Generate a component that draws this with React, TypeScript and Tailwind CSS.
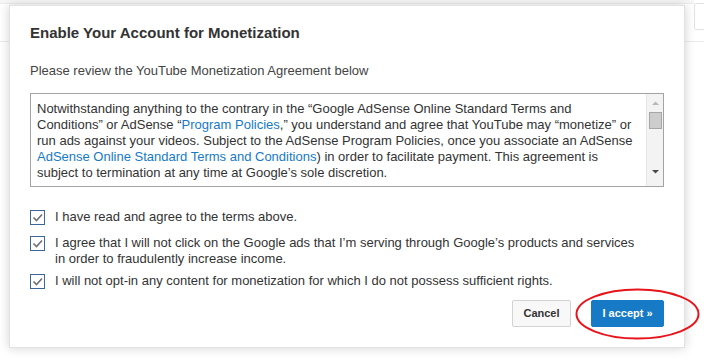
import React from "react";

const font = { fontFamily: '"Liberation Sans", Arial, sans-serif' };

function Check() {
  return (
    <span className="mt-[1px] flex h-[15px] w-[15px] shrink-0 items-center justify-center border border-[#3b679c] bg-white">
      <svg width="13" height="13" viewBox="0 0 13 13">
        <polyline points="2.5,6.5 5.5,9.5 11,3.5" fill="none" stroke="#707070" strokeWidth="1.6" />
      </svg>
    </span>
  );
}

function Scrollbar() {
  return (
    <div className="flex w-[17px] shrink-0 flex-col items-center border-l border-[#e6e6e6] bg-[#f3f3f3]">
      <svg width="9" height="6" viewBox="0 0 9 6" className="mt-[6px]">
        <polygon points="1,5 4.5,1.5 8,5" fill="#b8b8b8" />
      </svg>
      <div className="mt-[6px] h-[17px] w-[13px] border border-[#a6a6a6] bg-[#cdcdcd]" />
      <div className="flex-1" />
      <svg width="9" height="6" viewBox="0 0 9 6" className="mb-[11px]">
        <polygon points="1,1 8,1 4.5,4.5" fill="#4a4a4a" />
      </svg>
    </div>
  );
}

export default function App() {
  const link = "text-[#167ac6]";
  return (
    <div className="relative h-[362px] w-[704px] overflow-hidden bg-white" style={font}>
      {/* page behind the modal */}
      <div className="flex h-[42px] items-start border-b border-[#ececec]">
        <div className="h-[4px] flex-1 border-b border-[#ededed] bg-[#f7f7f7]" />
        <div className="mt-[3px] mr-[-6px] h-[27px] w-[16px] rounded-[2px] border border-[#e3e3e3]" />
      </div>

      {/* modal */}
      <div className="absolute left-[9px] top-[5px] flex h-[343px] w-[676px] flex-col border border-[#e2e2e2] bg-white px-[20px] pt-[18px] shadow-[0_0_10px_rgba(0,0,0,0.18)]">
        <h2 className="text-[15px] leading-[18px] font-bold text-[#333]">Enable Your Account for Monetization</h2>
        <p className="mt-[21px] text-[13px] leading-[16px] text-[#444]">
          Please review the YouTube Monetization Agreement below
        </p>

        <div className="mt-[14px] flex h-[94px] border border-[#a3a3a3]">
          <div className="flex-1 overflow-hidden pl-[6px] pt-[7px] text-[13px] leading-[16px] whitespace-nowrap text-[#333]">
            <div>Notwithstanding anything to the contrary in the “Google AdSense Online Standard Terms and</div>
            <div>
              Conditions” or AdSense “<span className={link}>Program Policies</span>,” you understand and agree that YouTube may “monetize” or
            </div>
            <div>run ads against your videos. Subject to the AdSense Program Policies, once you associate an AdSense</div>
            <div>
              <span className={link}>AdSense Online Standard Terms and Conditions</span>) in order to facilitate payment. This agreement is
            </div>
            <div>subject to termination at any time at Google’s sole discretion.</div>
          </div>
          <Scrollbar />
        </div>

        <div className="mt-[22px] flex flex-col text-[13px] leading-[16px] text-[#333]">
          <label className="flex items-start gap-[10px]">
            <Check />
            <span>I have read and agree to the terms above.</span>
          </label>
          <label className="mt-[10px] flex items-start gap-[10px]">
            <Check />
            <span>
              I agree that I will not click on the Google ads that I’m serving through Google’s products and services
              <br />
              in order to fraudulently increase income.
            </span>
          </label>
          <label className="mt-[6px] flex items-start gap-[10px]">
            <Check />
            <span>I will not opt-in any content for monetization for which I do not possess sufficient rights.</span>
          </label>
        </div>

        <div className="mt-[11px] flex justify-end gap-[20px]">
          <button className="h-[27px] w-[59px] rounded-[2px] border border-[#d3d3d3] bg-[#f8f8f8] text-[11px] font-bold text-[#333]">
            Cancel
          </button>
          <button className="h-[27px] w-[73px] rounded-[2px] border border-[#167ac6] bg-[#167ac6] text-[11px] font-bold text-white">
            I accept »
          </button>
        </div>
      </div>

      {/* red annotation */}
      <svg className="absolute left-[574px] top-[287px]" width="128" height="54" viewBox="0 0 128 54">
        <ellipse cx="63.5" cy="27" rx="61" ry="24.5" fill="none" stroke="#e8141b" strokeWidth="2" />
      </svg>
    </div>
  );
}
